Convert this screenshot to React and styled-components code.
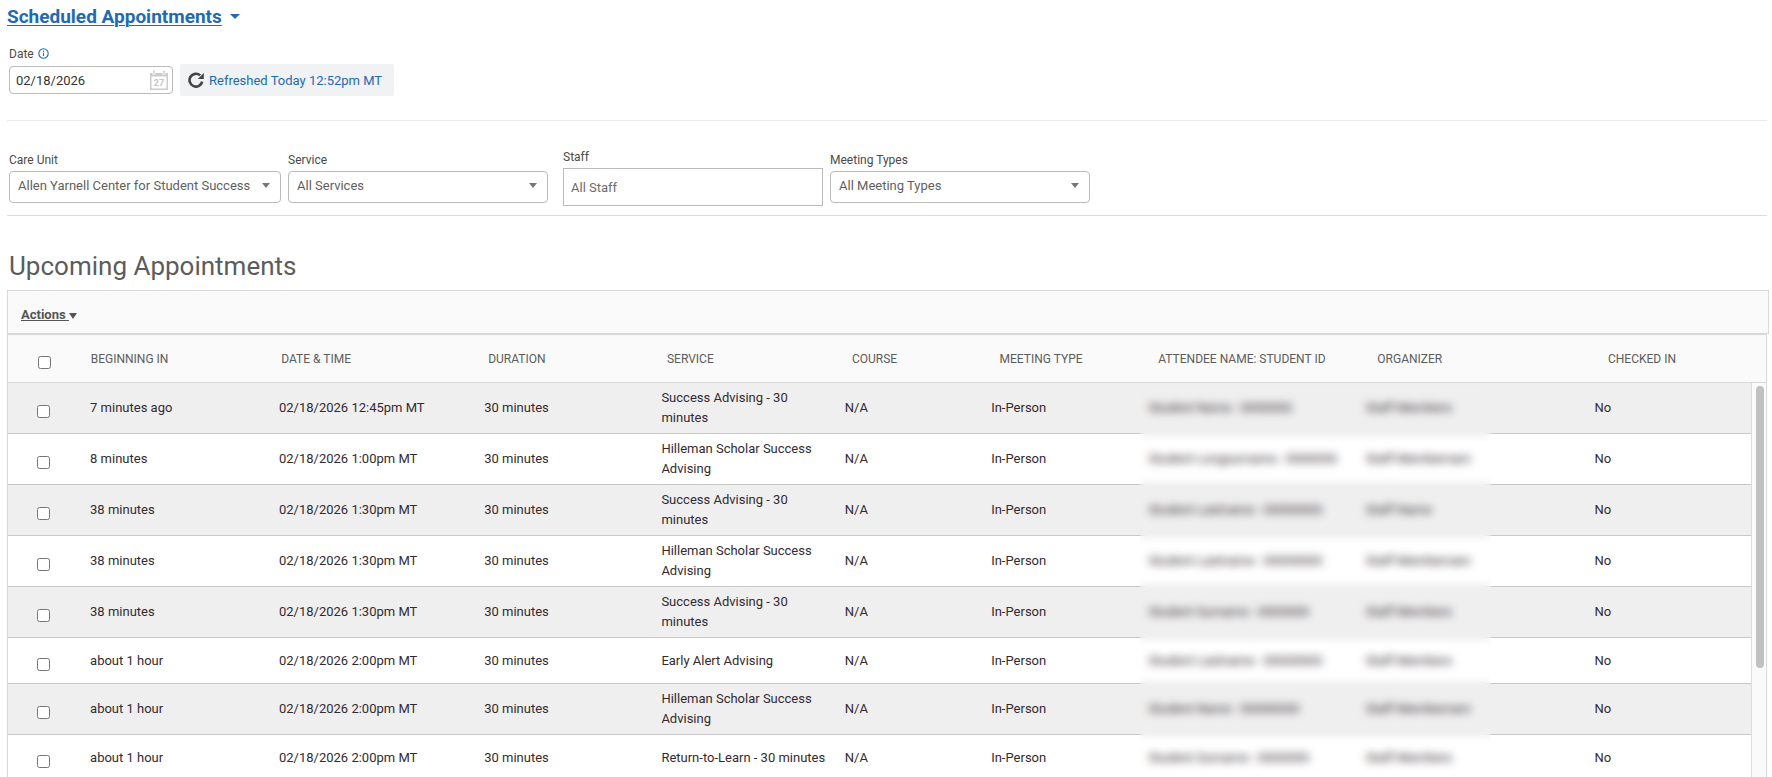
import { useState } from "react";
import styled, { createGlobalStyle } from "styled-components";

const columns = [
  { label: "", width: "4.25%" },
  { label: "Beginning In", width: "10.84%" },
  { label: "Date & Time", width: "11.77%" },
  { label: "Duration", width: "10.17%" },
  { label: "Service", width: "10.52%" },
  { label: "Course", width: "8.4%" },
  { label: "Meeting Type", width: "9.03%" },
  { label: "Attendee Name: Student ID", width: "12.46%" },
  { label: "Organizer", width: "13.12%" },
  { label: "Checked In", width: "9.44%" },
];

const successAdvising = "Success Advising - 30 minutes";
const hilleman = "Hilleman Scholar Success Advising";

const appointments = [
  { begins: "7 minutes ago", time: "12:45pm", service: successAdvising, attendee: "Student Name : 0000000", organizer: "Staff Members" },
  { begins: "8 minutes", time: "1:00pm", service: hilleman, attendee: "Student Longsurname : 0000000", organizer: "Staff Membernam" },
  { begins: "38 minutes", time: "1:30pm", service: successAdvising, attendee: "Student Lastname : 00000000", organizer: "Staff Name" },
  { begins: "38 minutes", time: "1:30pm", service: hilleman, attendee: "Student Lastname : 00000000", organizer: "Staff Membernam" },
  { begins: "38 minutes", time: "1:30pm", service: successAdvising, attendee: "Student Surname : 0000000", organizer: "Staff Members" },
  { begins: "about 1 hour", time: "2:00pm", service: "Early Alert Advising", attendee: "Student Lastname : 00000000", organizer: "Staff Members" },
  { begins: "about 1 hour", time: "2:00pm", service: hilleman, attendee: "Student Name : 00000000", organizer: "Staff Membernam" },
  { begins: "about 1 hour", time: "2:00pm", service: "Return-to-Learn - 30 minutes", attendee: "Student Surname : 0000000", organizer: "Staff Members" },
];

function SelectField({ id, label, value, wide }) {
  return (
    <Field>
      <Label htmlFor={id}>{label}</Label>
      <SelectBox $wide={wide}>
        <Select id={id} defaultValue={value}>
          <option>{value}</option>
        </Select>
        <SelectCaret />
      </SelectBox>
    </Field>
  );
}

function Columns() {
  return (
    <colgroup>
      {columns.map((column) => (
        <col key={column.width} style={{ width: column.width }} />
      ))}
    </colgroup>
  );
}

export default function App() {
  const [date, setDate] = useState("02/18/2026");
  const [staff, setStaff] = useState("");
  const [selected, setSelected] = useState([]);

  const toggle = (index) => {
    setSelected(
      selected.includes(index)
        ? selected.filter((i) => i !== index)
        : [...selected, index]
    );
  };
  const toggleAll = (e) => {
    setSelected(e.target.checked ? appointments.map((_, i) => i) : []);
  };

  return (
    <Page>
      <GlobalStyle />
      <Title>
        <TitleLink href="#appointments">Scheduled Appointments</TitleLink>
        <TitleCaret />
      </Title>
      <DateSection>
        <DateLabel htmlFor="date">
          Date
          <svg width="11" height="13" viewBox="0 0 11 13" fill="none" stroke="#1d6ab5">
            <circle cx="5.5" cy="5.5" r="4.7" strokeWidth="1.1" />
            <path d="M5.5 4.8v3.2M5.5 2.8v1.1" strokeWidth="1.1" />
          </svg>
        </DateLabel>
        <DateRow>
          <DateBox>
            <DateInput
              id="date"
              value={date}
              onChange={(e) => setDate(e.target.value)}
            />
            <svg width="18" height="20" viewBox="0 0 18 20">
              <path
                d="M0 3h2.5v1.5h3V3h7v1.5h3V3H18v17H0zM1.5 6.5v12h15v-12z"
                fill="#ccc"
                fillRule="evenodd"
              />
              <path d="M3.2 0.5h1.6v3H3.2zM13.2 0.5h1.6v3h-1.6z" fill="#ccc" />
              <text x="9" y="16" textAnchor="middle" fontSize="9" fontWeight="700" fill="#c4c4c4">
                27
              </text>
            </svg>
          </DateBox>
          <RefreshButton type="button">
            <svg width="16" height="16" viewBox="0 0 16 16">
              <path
                d="M14.2 9.6A6.4 6.4 0 1 1 12.2 3.4"
                fill="none"
                stroke="#444"
                strokeWidth="2.6"
              />
              <path d="M15.8 1v6H9.8z" fill="#444" />
            </svg>
            Refreshed Today 12:52pm MT
          </RefreshButton>
        </DateRow>
      </DateSection>
      <Filters>
        <SelectField id="care-unit" label="Care Unit" value="Allen Yarnell Center for Student Success" wide />
        <SelectField id="service" label="Service" value="All Services" />
        <StaffField>
          <Label htmlFor="staff">Staff</Label>
          <StaffInput
            id="staff"
            placeholder="All Staff"
            value={staff}
            onChange={(e) => setStaff(e.target.value)}
          />
        </StaffField>
        <SelectField id="meeting-types" label="Meeting Types" value="All Meeting Types" />
      </Filters>
      <Heading>Upcoming Appointments</Heading>
      <ActionBar>
        <ActionsButton type="button">
          <u>Actions&nbsp;</u>
          <ActionsCaret />
        </ActionsButton>
      </ActionBar>
      <Grid>
        <HeadTable>
          <Columns />
          <thead>
            <tr>
              {columns.map((column, i) => (
                <Th key={column.width} scope="col">
                  {i === 0 ? (
                    <Checkbox
                      type="checkbox"
                      aria-label="Select all"
                      checked={selected.length === appointments.length}
                      onChange={toggleAll}
                    />
                  ) : (
                    column.label
                  )}
                </Th>
              ))}
            </tr>
          </thead>
        </HeadTable>
        <ScrollArea>
          <Rows>
            <Table>
              <Columns />
              <tbody>
                {appointments.map((item, i) => (
                  <Row key={i}>
                    <Td>
                      <Checkbox
                        type="checkbox"
                        aria-label="Select appointment"
                        checked={selected.includes(i)}
                        onChange={() => toggle(i)}
                      />
                    </Td>
                    <Td>{item.begins}</Td>
                    <Td>02/18/2026 {item.time} MT</Td>
                    <Td>30 minutes</Td>
                    <Td>{item.service}</Td>
                    <Td>N/A</Td>
                    <Td>In-Person</Td>
                    <Td>{item.attendee}</Td>
                    <Td>{item.organizer}</Td>
                    <Td>No</Td>
                  </Row>
                ))}
              </tbody>
            </Table>
            <PrivacyBlur />
          </Rows>
          <ScrollTrack>
            <ScrollThumb />
          </ScrollTrack>
        </ScrollArea>
      </Grid>
    </Page>
  );
}

const GlobalStyle = createGlobalStyle`
  * {
    box-sizing: border-box;
  }
  body {
    margin: 0;
    background-color: white;
  }
  body, button, input, select {
    font-family: Roboto, "Liberation Sans", sans-serif;
  }
`;

const Page = styled.div`
  display: flex;
  flex-direction: column;
  height: 100vh;
  overflow: hidden;
  padding: 0 3px 0 7px;
  color: #4a4a4a;
`;
const Title = styled.h1`
  display: flex;
  align-items: center;
  gap: 8px;
  height: 32px;
  margin: 0;
  font-size: 19px;
  font-weight: 700;
`;
const TitleLink = styled.a`
  color: #1d6ab5;
  text-decoration: underline;
  text-decoration-thickness: 1px;
  text-underline-offset: 2px;
`;
const Caret = styled.span`
  width: 0;
  border: 5px solid transparent;
  border-bottom: 0;
  border-top-color: #777;
`;
const TitleCaret = styled(Caret)`
  border-top-color: #1d6ab5;
`;
const DateSection = styled.div`
  padding: 12px 2px 24px;
  margin-right: 2px;
  border-bottom: 1px solid #ebebeb;
`;
const Label = styled.label`
  font-size: 12px;
  line-height: 20px;
`;
const DateLabel = styled(Label)`
  display: flex;
  gap: 4px;
  align-items: center;
`;
const DateRow = styled.div`
  display: flex;
  align-items: center;
  gap: 7px;
`;
const DateBox = styled.div`
  display: flex;
  align-items: center;
  width: 164px;
  height: 28px;
  padding: 0 4px 0 6px;
  border: 1px solid #bbb;
  border-radius: 4px;
`;
const DateInput = styled.input`
  flex: 1;
  min-width: 0;
  padding: 0;
  border: 0;
  outline: 0;
  color: #333;
  font-size: 13px;
`;
const RefreshButton = styled.button`
  display: flex;
  align-items: center;
  gap: 5px;
  height: 32px;
  padding: 0 12px 0 8px;
  border: 0;
  border-radius: 2px;
  background-color: #f1f2f4;
  color: #1d6ab5;
  font-size: 13px;
`;
const Filters = styled.div`
  display: flex;
  align-items: center;
  gap: 7px;
  margin-right: 2px;
  padding: 26px 2px 9px;
  border-bottom: 1px solid #ddd;
`;
const Field = styled.div`
  display: flex;
  flex-direction: column;
  gap: 1px;
`;
const StaffField = styled(Field)`
  margin-left: 8px;
`;
const SelectBox = styled.div`
  display: flex;
  align-items: center;
  width: ${(props) => (props.$wide ? "272px" : "260px")};
  height: 32px;
  padding: 0 10px 4px 8px;
  border: 1px solid #bbb;
  border-radius: 4px;
`;
const Select = styled.select`
  flex: 1;
  min-width: 0;
  padding: 0;
  border: 0;
  outline: 0;
  appearance: none;
  background: none;
  color: #5f5f5f;
  font-size: 13px;
`;
const SelectCaret = styled(Caret)`
  border-width: 5px 4px 0;
  pointer-events: none;
`;
const StaffInput = styled.input`
  width: 260px;
  height: 38px;
  padding: 0 7px;
  border: 1px solid #bbb;
  outline: 0;
  color: #666;
  font-size: 13px;
  &::placeholder {
    color: #6c6c6c;
  }
`;
const Heading = styled.h2`
  margin: 34px 2px 8px;
  color: #5c5c5c;
  font-size: 26px;
  font-weight: 400;
  line-height: 32px;
`;
const ActionBar = styled.div`
  display: flex;
  align-items: center;
  flex-shrink: 0;
  height: 44px;
  padding: 4px 13px 0;
  border: 1px solid #d8d8d8;
  background-color: #fafafa;
`;
const ActionsButton = styled.button`
  display: flex;
  align-items: center;
  padding: 0;
  border: 0;
  background: none;
  color: #555;
  font-size: 13px;
  font-weight: 700;
`;
const ActionsCaret = styled(Caret)`
  margin-top: 4px;
  border-width: 6px 4px 0;
  border-top-color: #555;
`;
const Grid = styled.div`
  display: flex;
  flex: 1;
  flex-direction: column;
  min-height: 0;
  margin-right: 2px;
  border: 1px solid #d8d8d8;
  border-bottom: 0;
`;
const Table = styled.table`
  width: 100%;
  table-layout: fixed;
  border-spacing: 0;
`;
const HeadTable = styled(Table)`
  background-color: #fafafa;
`;
const Th = styled.th`
  height: 48px;
  padding: 0 0 0 8px;
  border-bottom: 1px solid #d8d8d8;
  color: #5c5c5c;
  font-size: 12px;
  font-weight: 400;
  text-align: left;
  text-transform: uppercase;
  white-space: nowrap;
`;
const Checkbox = styled.input`
  display: block;
  width: 13px;
  height: 13px;
  margin: 7px 0 0 22px;
`;
const ScrollArea = styled.div`
  display: flex;
  flex: 1;
  min-height: 0;
  overflow: hidden;
`;
const Rows = styled.div`
  position: relative;
  flex: 1;
  align-self: flex-start;
`;
const Row = styled.tr`
  background-color: white;
  &:nth-child(odd) {
    background-color: #efefef;
  }
`;
const Td = styled.td`
  height: 46px;
  padding: 5px 4px 5px 8px;
  border-bottom: 1px solid #c8c8c8;
  color: #332a31;
  font-size: 13px;
  line-height: 20px;
  &:first-child {
    padding-left: 7px;
  }
`;
const PrivacyBlur = styled.div`
  position: absolute;
  top: 0;
  bottom: 0;
  left: 65%;
  right: 15%;
  margin: 0 -1px;
  backdrop-filter: blur(4px);
`;
const ScrollTrack = styled.div`
  width: 15px;
  padding: 3px 2px 0 4px;
  border-left: 1px solid #ddd;
  background-color: #fafafa;
`;
const ScrollThumb = styled.div`
  width: 8px;
  height: 72%;
  border-radius: 4px;
  background-color: #c1c1c1;
`;
